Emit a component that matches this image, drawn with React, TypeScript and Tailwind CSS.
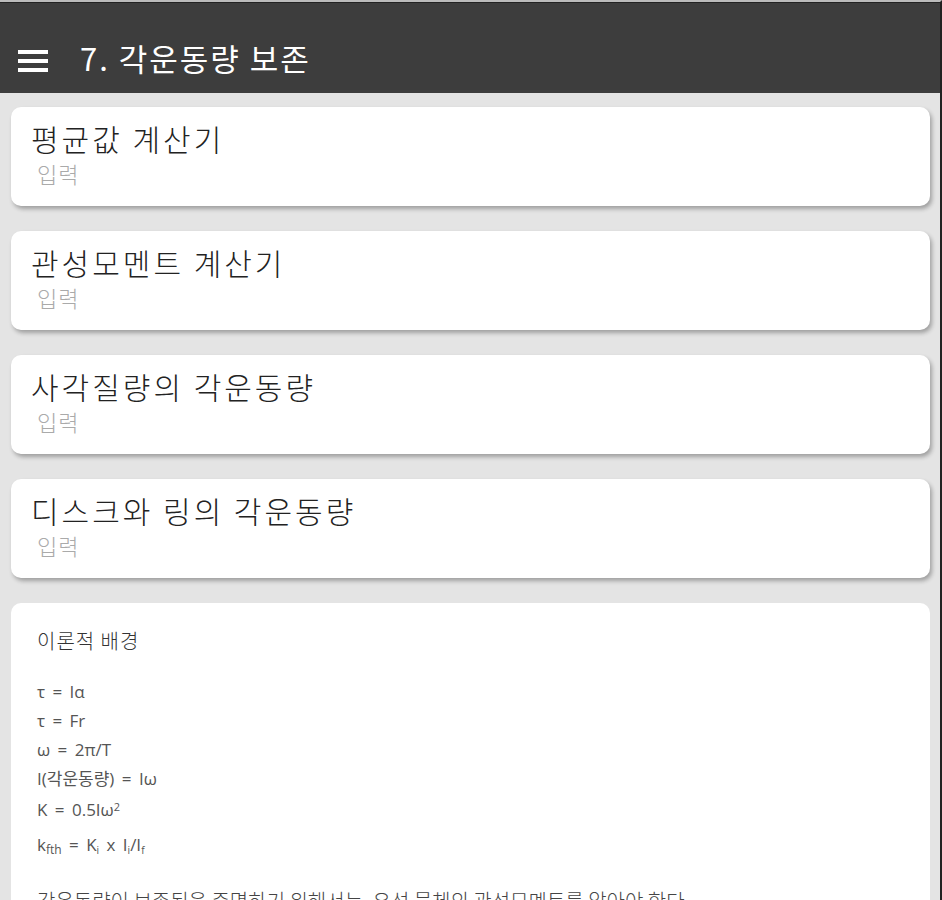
import { Menu } from "lucide-react";

const items = [
  "평균값 계산기",
  "관성모멘트 계산기",
  "사각질량의 각운동량",
  "디스크와 링의 각운동량",
];

function ItemCard({ title }: { title: string }) {
  return (
    <div className="bg-white rounded-[10px] shadow-[2px_3px_4px_rgba(0,0,0,0.3)] h-[99px] pl-[20px] pt-[14px]">
      <div className="text-[30px] leading-[34px] text-[#222] font-light tracking-[3px]">{title}</div>
      <div className="mt-[4px] text-[22px] leading-[28px] text-[#aaa] font-light tracking-[1px] pl-[6px]">입력</div>
    </div>
  );
}

export default function App() {
  return (
    <div
      className="w-[942px] h-[900px] overflow-hidden bg-[#e4e4e4] border-t-2 border-t-[#bbb] border-r-2 border-r-[#222]"
      style={{ fontFamily: '"Noto Sans CJK KR", "Noto Sans", sans-serif' }}
    >
      {/* header */}
      <div className="h-[91px] bg-[#3d3d3d] border-t border-t-[#222] flex items-end pb-[17px] pl-[18px]">
        <svg width="30" height="24" viewBox="0 0 30 24" className="mb-[3px]">
          <rect x="0" y="1" width="30" height="4" fill="#fff" />
          <rect x="0" y="10" width="30" height="4" fill="#fff" />
          <rect x="0" y="19" width="30" height="4" fill="#fff" />
        </svg>
        <div className="ml-[32px] text-white text-[31px] leading-[36px] tracking-[2px]">7. 각운동량 보존</div>
      </div>

      {/* list */}
      <div className="flex flex-col gap-[25px] pl-[11px] pr-[10px] pt-[14px]">
        {items.map((t) => (
          <ItemCard key={t} title={t} />
        ))}

        <div className="bg-white rounded-[10px] h-[400px] pl-[26px] pt-[24px]">
          <div className="text-[20px] leading-[28px] text-[#333] font-light tracking-[1px]">이론적 배경</div>
          <div
            className="mt-[22px] text-[17px] leading-[29px] text-[#555] [word-spacing:3px]"
            style={{ fontFamily: '"Open Sans", "Noto Sans CJK KR", sans-serif' }}
          >
            <div>τ = Iα</div>
            <div>τ = Fr</div>
            <div>ω = 2π/T</div>
            <div>I(각운동량) = Iω</div>
            <div className="mt-[2px]">
              K = 0.5Iω<sup className="text-[11px]">2</sup>
            </div>
            <div className="mt-[6px]">
              k<sub className="text-[12px]">fth</sub> = K<sub className="text-[10px]">i</sub> x I
              <sub className="text-[10px]">i</sub>/I<sub className="text-[10px]">f</sub>
            </div>
          </div>
          <div className="mt-[28px] text-[20px] leading-[28px] text-[#444] font-light">
            각운동량이 보존됨을 증명하기 위해서는, 우선 물체의 관성모멘트를 알아야 한다.
          </div>
        </div>
      </div>
    </div>
  );
}
